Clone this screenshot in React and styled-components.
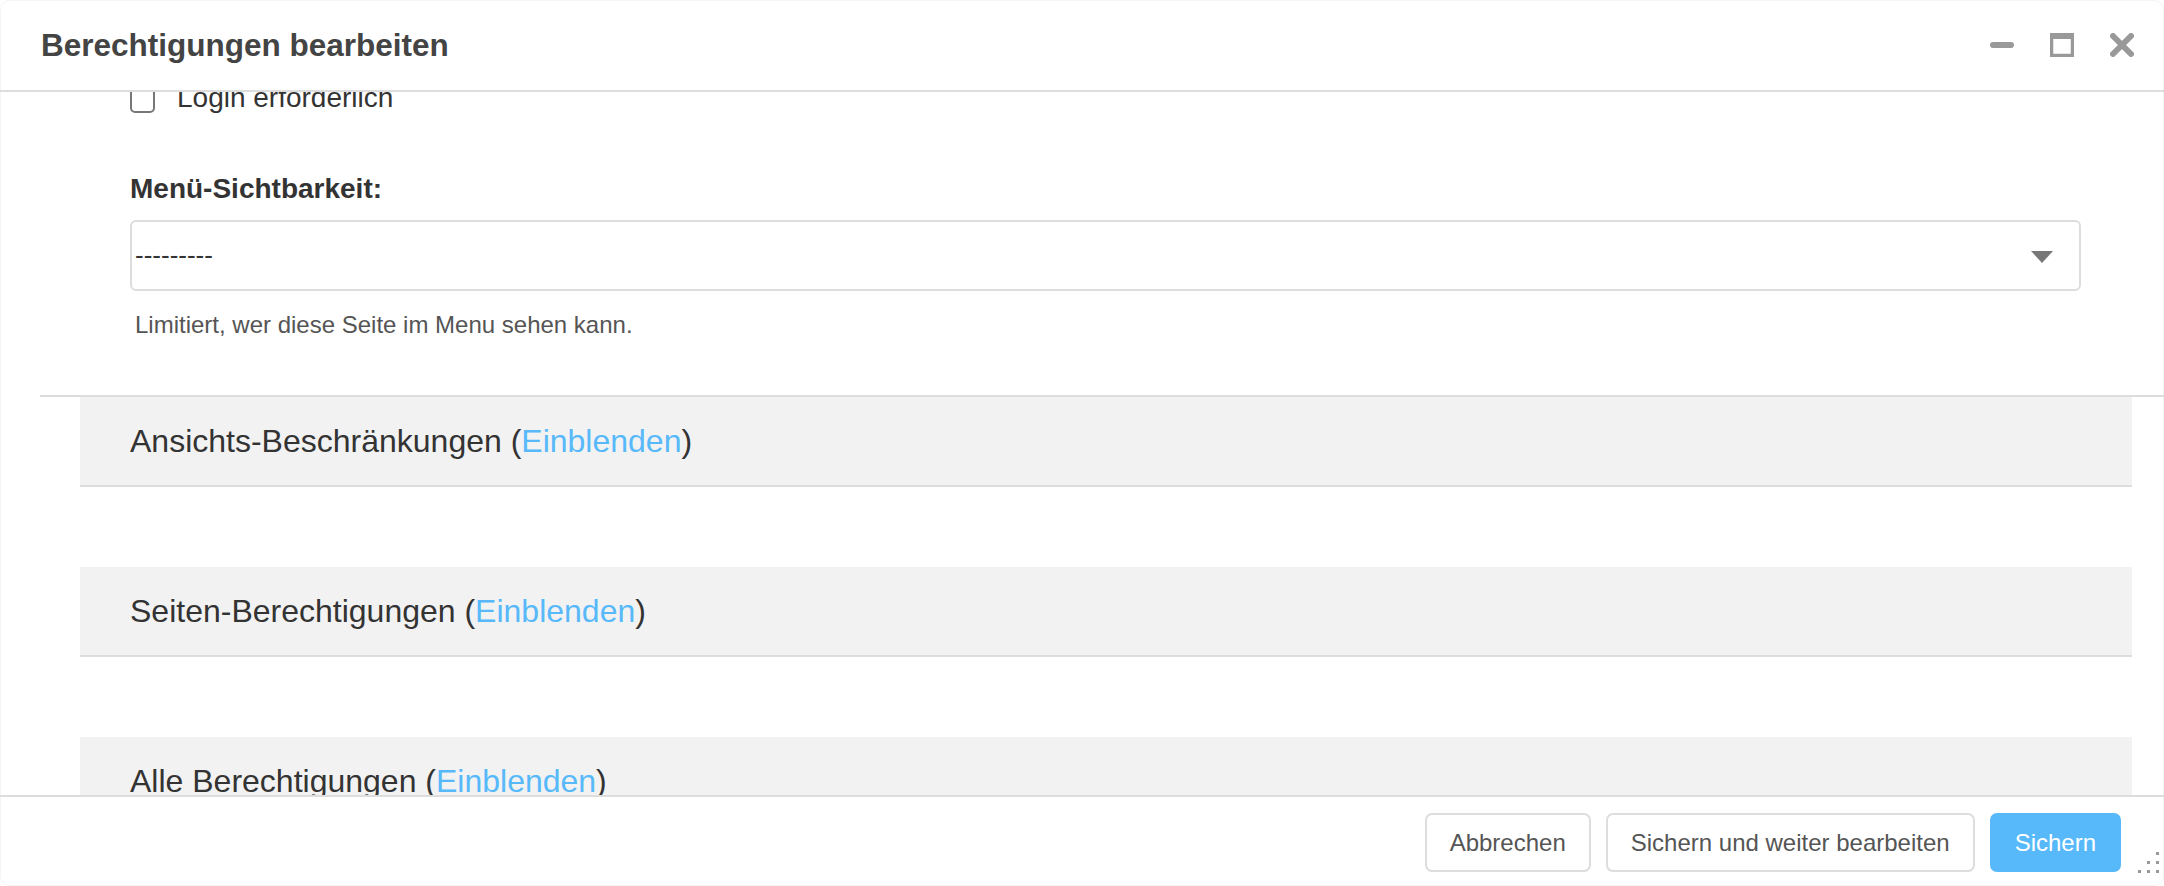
import React from 'react'
import styled, { createGlobalStyle } from 'styled-components'

const GlobalStyle = createGlobalStyle`
  html, body {
    margin: 0;
    padding: 0;
    background: #fff;
  }
  body {
    font-family: 'Liberation Sans', Arial, sans-serif;
    color: #333;
  }
`

const Dialog = styled.div`
  width: 2164px;
  height: 886px;
  display: flex;
  flex-direction: column;
  background: #fff;
  border-radius: 10px;
  box-shadow: inset 0 0 0 1px #f4f4f4;
  overflow: hidden;
  position: relative;
`

const Header = styled.div`
  height: 90px;
  flex-shrink: 0;
  display: flex;
  align-items: center;
  justify-content: space-between;
  padding: 0 30px 0 41px;
  border-bottom: 2px solid #ddd;
`

const Title = styled.h1`
  margin: 0;
  font-size: 31.5px;
  font-weight: 700;
  color: #444;
  line-height: 40px;
`

const Controls = styled.div`
  display: flex;
  align-items: center;
  gap: 36px;
`

const IconBox = styled.span`
  width: 24px;
  height: 24px;
  display: flex;
  align-items: center;
  justify-content: center;
  color: #999;
`

const Body = styled.div`
  flex: 1;
  overflow: hidden;
  padding-left: 40px;
`

const Scrolled = styled.div`
  margin-top: -14px;
`

const FormBlock = styled.div`
  padding: 0 83px 53px 90px;
`

const CheckRow = styled.label`
  display: flex;
  align-items: center;
  gap: 22px;
  height: 40px;
  font-size: 28px;
  color: #333;
`

const Box = styled.span`
  width: 25px;
  height: 25px;
  box-sizing: border-box;
  border: 2px solid #777;
  border-radius: 5px;
  margin-top: 4px;
  background: #fff;
`

const Label = styled.div`
  margin-top: 51px;
  font-size: 28px;
  font-weight: 700;
  line-height: 40px;
  color: #333;
`

const Select = styled.div`
  margin-top: 11px;
  height: 71px;
  box-sizing: border-box;
  border: 2px solid #ddd;
  border-radius: 6px;
  display: flex;
  align-items: center;
  justify-content: space-between;
  padding: 0 26px 0 3px;
  font-size: 26px;
  color: #333;
`

const Caret = styled.span`
  width: 0;
  height: 0;
  border-left: 11px solid transparent;
  border-right: 11px solid transparent;
  border-top: 12px solid #777;
  margin-top: 2px;
`

const Help = styled.div`
  margin-top: 17px;
  font-size: 24px;
  line-height: 34px;
  color: #555;
  padding-left: 5px;
`

const Sections = styled.div`
  border-top: 2px solid #ddd;
  padding: 0 32px 0 40px;
  display: flex;
  flex-direction: column;
  gap: 80px;
`

const Panel = styled.div`
  background: #f2f2f2;
  border-bottom: 2px solid #ddd;
  height: 88px;
  padding-left: 50px;
  font-size: 32px;
  line-height: 88px;
  color: #333;
`

const Toggle = styled.a`
  color: #58b9fa;
  text-decoration: none;
`

const Footer = styled.div`
  flex-shrink: 0;
  height: 91px;
  border-top: 2px solid #ddd;
  display: flex;
  justify-content: flex-end;
  align-items: flex-start;
  gap: 15px;
  padding: 16px 43px 0 0;
  box-sizing: border-box;
`

const Button = styled.button`
  height: 59px;
  padding: 0 23px;
  border-radius: 7px;
  font-family: 'Liberation Sans', Arial, sans-serif;
  font-size: 24px;
  border: 2px solid ${p => (p.$primary ? '#58b9fa' : '#ddd')};
  background: ${p => (p.$primary ? '#58b9fa' : '#fff')};
  color: ${p => (p.$primary ? '#fff' : '#555')};
`

const Grip = styled.svg`
  position: absolute;
  right: 2px;
  bottom: 10px;
`

const sections = ['Ansichts-Beschränkungen', 'Seiten-Berechtigungen', 'Alle Berechtigungen']

export default function App() {
  return (
    <>
      <GlobalStyle />
      <Dialog>
        <Header>
          <Title>Berechtigungen bearbeiten</Title>
          <Controls>
            <IconBox>
              <svg width="24" height="24" viewBox="0 0 24 24">
                <rect x="0" y="9" width="24" height="6" rx="3" fill="currentColor" />
              </svg>
            </IconBox>
            <IconBox>
              <svg width="24" height="24" viewBox="0 0 24 24">
                <rect x="1.5" y="2" width="21" height="20.5" fill="none" stroke="currentColor" strokeWidth="3.5" />
                <rect x="0" y="0" width="24" height="6" fill="currentColor" />
              </svg>
            </IconBox>
            <IconBox>
              <svg width="24" height="24" viewBox="0 0 24 24">
                <path d="M3 3 L21 21 M21 3 L3 21" stroke="currentColor" strokeWidth="6" strokeLinecap="round" />
              </svg>
            </IconBox>
          </Controls>
        </Header>
        <Body>
          <Scrolled>
            <FormBlock>
              <CheckRow>
                <Box />
                Login erforderlich
              </CheckRow>
              <Label>Menü-Sichtbarkeit:</Label>
              <Select>
                <span>---------</span>
                <Caret />
              </Select>
              <Help>Limitiert, wer diese Seite im Menu sehen kann.</Help>
            </FormBlock>
            <Sections>
              {sections.map(s => (
                <Panel key={s}>
                  {s} (<Toggle href="#">Einblenden</Toggle>)
                </Panel>
              ))}
            </Sections>
          </Scrolled>
        </Body>
        <Footer>
          <Button>Abbrechen</Button>
          <Button>Sichern und weiter bearbeiten</Button>
          <Button $primary>Sichern</Button>
        </Footer>
        <Grip width="24" height="24" viewBox="0 0 24 24">
          {[[18, 0], [9, 9], [18, 9], [0, 18], [9, 18], [18, 18]].map(([x, y]) => (
            <rect key={`${x}-${y}`} x={x} y={y} width="3" height="3" fill="#999" />
          ))}
        </Grip>
      </Dialog>
    </>
  )
}
